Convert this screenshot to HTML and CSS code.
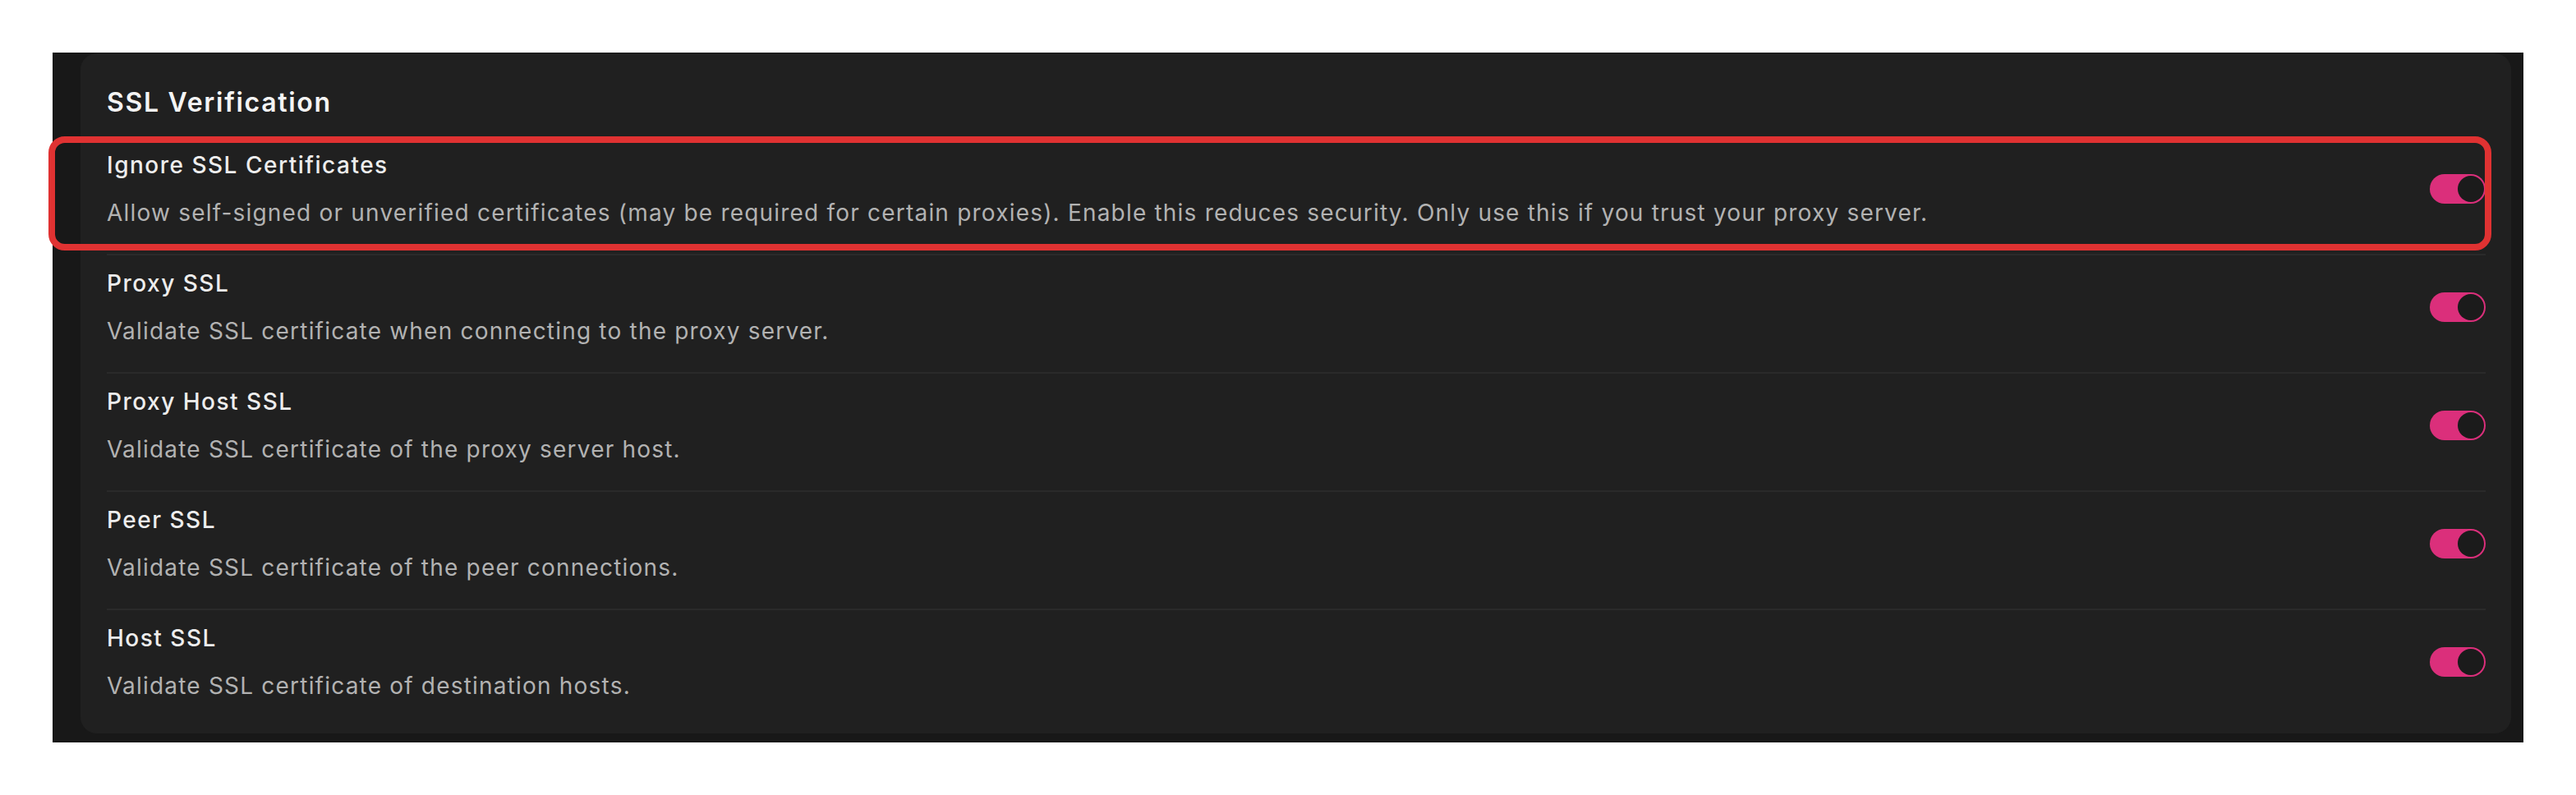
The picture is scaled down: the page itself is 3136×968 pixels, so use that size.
FILE: index.html
```html
<!DOCTYPE html>
<html lang="en">
<head>
<meta charset="utf-8">
<title>SSL Verification</title>
<link rel="stylesheet" href="styles.css">
</head>
<body>
<div class="frame">
  <section class="card">
    <h2 class="card-title">SSL Verification</h2>
    <div class="rows">
      <div class="row">
        <div class="row-text">
          <div class="row-label">Ignore SSL Certificates</div>
          <div class="row-desc">Allow self-signed or unverified certificates (may be required for certain proxies). Enable this reduces security. Only use this if you trust your proxy server.</div>
        </div>
        <span class="toggle"><span class="knob"></span></span>
      </div>
      <div class="row">
        <div class="row-text">
          <div class="row-label">Proxy SSL</div>
          <div class="row-desc">Validate SSL certificate when connecting to the proxy server.</div>
        </div>
        <span class="toggle"><span class="knob"></span></span>
      </div>
      <div class="row">
        <div class="row-text">
          <div class="row-label">Proxy Host SSL</div>
          <div class="row-desc">Validate SSL certificate of the proxy server host.</div>
        </div>
        <span class="toggle"><span class="knob"></span></span>
      </div>
      <div class="row">
        <div class="row-text">
          <div class="row-label">Peer SSL</div>
          <div class="row-desc">Validate SSL certificate of the peer connections.</div>
        </div>
        <span class="toggle"><span class="knob"></span></span>
      </div>
      <div class="row">
        <div class="row-text">
          <div class="row-label">Host SSL</div>
          <div class="row-desc">Validate SSL certificate of destination hosts.</div>
        </div>
        <span class="toggle"><span class="knob"></span></span>
      </div>
    </div>
  </section>
</div>
<div class="highlight"></div>
</body>
</html>
```

FILE: styles.css
```css
* { box-sizing: border-box; }

html, body {
  margin: 0;
  padding: 0;
  background: #ffffff;
}

body {
  position: relative;
  width: 3136px;
  height: 968px;
  padding: 64px;
  font-family: Inter, "Noto Sans", "Liberation Sans", sans-serif;
}

.frame {
  height: 840px;
  background: #181818;
  padding: 1px 15px 11px 34px;
}

.card {
  height: 100%;
  background: #202020;
  border-radius: 20px;
  padding: 40px 31px 0 32px;
}

.card-title {
  margin: 0 0 22px 0;
  font-size: 32px;
  line-height: 40px;
  font-weight: 600;
  letter-spacing: 1.7px;
  color: #f4f4f4;
}

.rows {
  display: flex;
  flex-direction: column;
}

.row {
  display: flex;
  align-items: center;
  justify-content: space-between;
  padding: 16px 0 32px 0;
  border-bottom: 2px solid #2a2a2a;
}

.row:last-child {
  border-bottom: none;
}

.row-text {
  display: flex;
  flex-direction: column;
  gap: 22px;
}

.row-label {
  font-size: 28px;
  line-height: 36px;
  font-weight: 500;
  letter-spacing: 1.5px;
  color: #ededed;
}

.row-desc {
  font-size: 28px;
  line-height: 36px;
  font-weight: 400;
  letter-spacing: 1.2px;
  color: #b2b2b2;
}

.toggle {
  position: relative;
  flex: none;
  width: 68px;
  height: 36px;
  border-radius: 18px;
  background: #db2f7b;
}

.knob {
  position: absolute;
  top: 2px;
  right: 2px;
  width: 32px;
  height: 32px;
  border-radius: 50%;
  background: #1b1b1b;
}

.highlight {
  position: absolute;
  left: 59px;
  top: 166px;
  width: 2974px;
  height: 139px;
  border: 8px solid #e03232;
  border-radius: 20px;
  pointer-events: none;
}
```
